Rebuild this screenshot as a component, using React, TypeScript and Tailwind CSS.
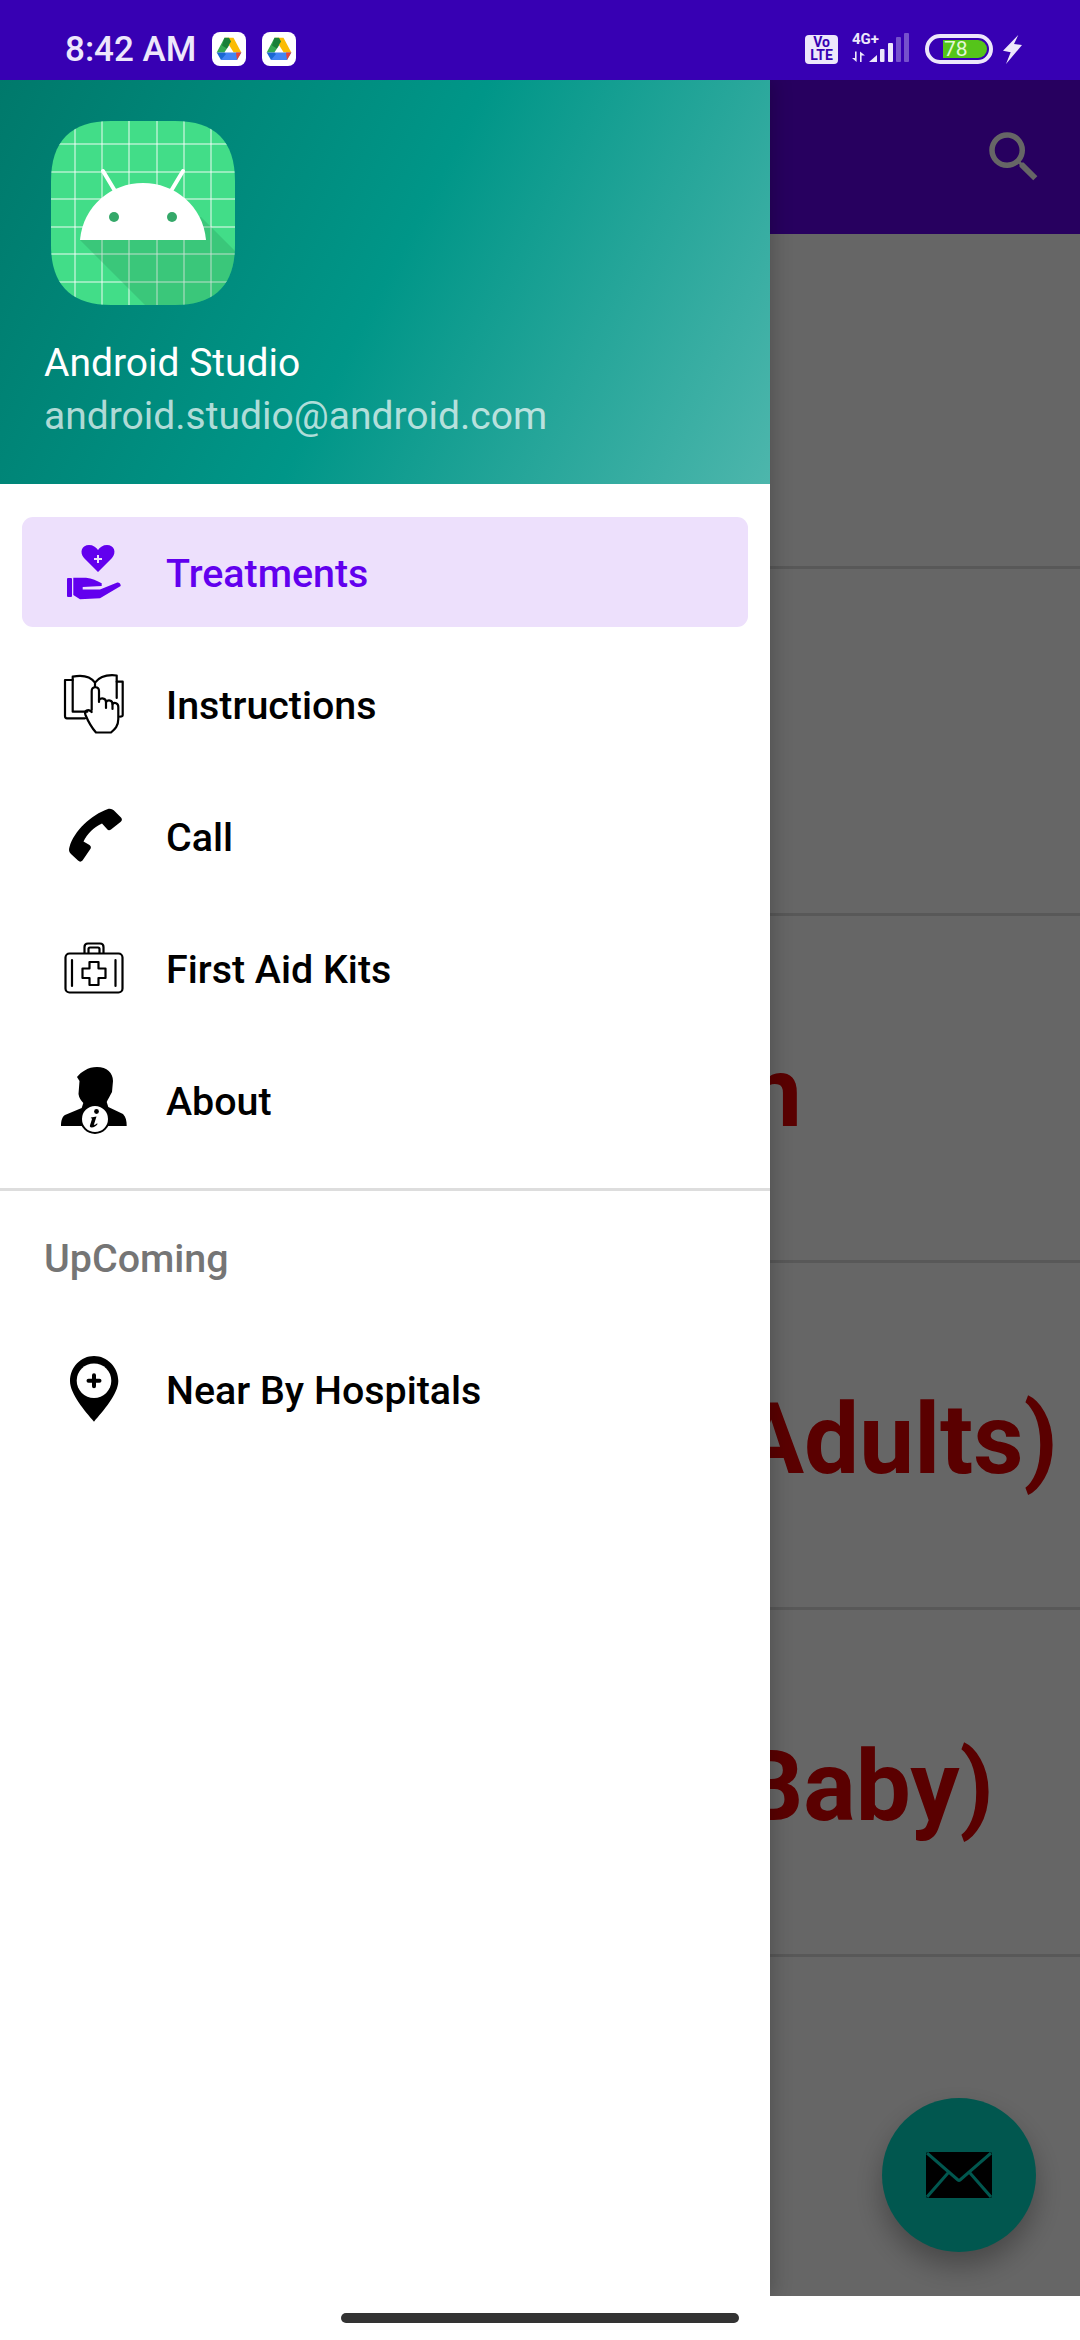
import React from 'react';

const Drive = () => (
  <div className="w-[34px] h-[34px] bg-white rounded-[8px] shrink-0">
    <svg viewBox="0 0 34 34" className="w-full h-full">
      <polygon points="12.5,5.7 21.5,5.7 29.3,20.5 21.7,20.5" fill="#fbbc04" />
      <polygon points="12.5,5.7 17,13.5 12.3,20.5 4.7,20.5" fill="#34a853" />
      <polygon points="12.5,5.7 17,5.7 19,9.5 14.8,16.5 10,13.5" fill="#188038" />
      <polygon points="12.3,20.5 29.3,20.5 25,28 9,28" fill="#4285f4" />
      <polygon points="4.7,20.5 12.3,20.5 14,22 9,28" fill="#1967d2" />
      <polygon points="24,20.5 29.3,20.5 25,28" fill="#ea4335" />
    </svg>
  </div>
);

const StatusBar = () => (
  <div className="h-[80px] shrink-0 bg-[#3700b3] flex items-center justify-between pl-[65px] pr-[58px] pt-[18px] text-[#ede7fb]">
    <div className="flex items-center">
      <span className="text-[35px] font-medium leading-none w-[147px]">8:42 AM</span>
      <div className="flex gap-[16px]">
        <Drive />
        <Drive />
      </div>
    </div>
    <div className="flex items-center">
      <div className="w-[33px] h-[29px] bg-[#ede7fb] rounded-[4px] flex flex-col items-center justify-center text-[#3700b3] text-[14px] font-bold leading-[13px]">
        <span>Vo</span>
        <span>LTE</span>
      </div>
      <div className="w-[58px] h-[32px] ml-[14px] relative">
        <span className="absolute left-0 top-[-2px] text-[15px] font-bold leading-[16px]">4G+</span>
        <svg viewBox="0 0 58 32" className="absolute inset-0 w-full h-full overflow-visible" fill="currentColor">
          <path d="M3 18.5H4.6V29L0 25H3Z M8 18.5V29H9.6V22.5H13L8 18.5Z" />
          <polygon points="17,29 25,29 25,22" />
          <rect x="28" y="16" width="4.5" height="13" rx="1" />
          <rect x="36" y="10" width="5" height="19" rx="1" />
          <rect x="44" y="4" width="5" height="25" rx="1" opacity=".35" />
          <rect x="52" y="0" width="5" height="29" rx="1" opacity=".35" />
        </svg>
      </div>
      <div className="w-[68px] h-[30px] ml-[15px] border-[4px] border-[#ede7fb] rounded-full flex items-center justify-start pl-[14px]">
        <div className="w-[44px] h-[18px] bg-[#55c41a] rounded-r-full text-[21px] leading-[18px] text-[#e4f7d6] pl-[1px]">78</div>
      </div>
      <svg viewBox="0 0 19 29" className="w-[19px] h-[29px] ml-[10px]" fill="currentColor">
        <polygon points="15.3,0 0,15.7 7.7,17.3 3,29 19,10 11,9" />
      </svg>
    </div>
  </div>
);

const rows = [
  { h: 'h-[335px]', text: '', pr: 'pr-0' },
  { h: 'h-[347px]', text: '', pr: 'pr-0' },
  { h: 'h-[347px]', text: 'Burn', pr: 'pr-[278px]' },
  { h: 'h-[347px]', text: '(Adults)', pr: 'pr-[22px]' },
  { h: 'h-[347px]', text: '(Baby)', pr: 'pr-[86px]' },
];

const Content = () => (
  <div className="absolute inset-0 flex flex-col bg-white">
    <div className="h-[154px] shrink-0 bg-[#6200ee] flex items-center justify-end pr-[33px]">
      <svg viewBox="0 0 24 24" className="w-[66px] h-[66px]" fill="#ffffff">
        <path d="M15.5 14h-.79l-.28-.27A6.471 6.471 0 0 0 16 9.5 6.5 6.5 0 1 0 9.5 16c1.61 0 3.09-.59 4.23-1.57l.27.28v.79l5 4.99L20.49 19l-4.99-5zm-6 0C7.01 14 5 11.99 5 9.5S7.01 5 9.5 5 14 7.01 14 9.5 11.99 14 9.5 14z" />
      </svg>
    </div>
    {rows.map((r, i) => (
      <div key={i} className={`${r.h} shrink-0 border-b-[3px] border-[#dddddd] flex items-center justify-end ${r.pr} pt-[9px]`}>
        <span className="text-[98px] font-bold text-[#e00000] leading-none whitespace-nowrap">{r.text}</span>
      </div>
    ))}
  </div>
);

const AppLogo = () => (
  <svg viewBox="0 0 184 184" className="w-[184px] h-[184px] ml-[7px]">
    <defs>
      <clipPath id="squircle">
        <path d="M60 0H124C164 0 184 20 184 60V124C184 164 164 184 124 184H60C20 184 0 164 0 124V60C0 20 20 0 60 0Z" />
      </clipPath>
    </defs>
    <g clipPath="url(#squircle)">
      <rect width="184" height="184" fill="#42dd88" />
      <g stroke="#ffffff" strokeOpacity=".45" strokeWidth="2">
        {[24, 51, 78, 106, 133, 160].map((x) => (
          <line key={x} x1={x} y1="0" x2={x} y2="184" />
        ))}
        {[23, 51, 78, 106, 133, 161].map((y) => (
          <line key={y} x1="0" y1={y} x2="184" y2={y} />
        ))}
      </g>
      <polygon points="29,119 94,184 184,184 184,130 150,96" fill="#1f7a4a" fillOpacity=".22" />
    </g>
    <g stroke="#ffffff" strokeWidth="4" strokeLinecap="round">
      <line x1="64" y1="70" x2="52" y2="50" />
      <line x1="120" y1="70" x2="132" y2="50" />
    </g>
    <path d="M29 119C32 85 60 62 92 62C124 62 152 85 155 119Z" fill="#ffffff" />
    <circle cx="63" cy="96" r="5" fill="#34a869" />
    <circle cx="121" cy="96" r="5" fill="#34a869" />
  </svg>
);

const TreatIcon = () => (
  <svg viewBox="0 0 66 66" className="w-[66px] h-[66px]" fill="#6200ee">
    <path d="M37 33L23 19C18 13 21 6 28 6C32 6 35 8 37 11C39 8 42 6 46 6C53 6 56 13 51 19Z" />
    <rect x="36" y="16" width="2" height="8" fill="#ede0fc" />
    <rect x="33" y="19" width="8" height="2" fill="#ede0fc" />
    <rect x="6" y="39" width="5" height="19" rx="1" />
    <path d="M12.3 38.7L25 38.7C31 39 36 42 40.7 44.3L40.7 47L21.7 48V50.5L39 50.5L55.7 43.7C58 43 60 45 59.7 47L39 59.3L19 60.3L12.3 56Z" />
  </svg>
);

const BookIcon = () => (
  <svg viewBox="0 0 66 66" className="w-[66px] h-[66px]" fill="none" stroke="#000000" strokeWidth="2.2" strokeLinejoin="round" strokeLinecap="round">
    <path d="M11.7 9H4V45C4 46.5 5 47.3 6 47.3H24" />
    <path d="M26.3 40.7H11.7V5.7C20 4 29 5 34 11.7C39 5 47 3.5 55.7 4.5V27" />
    <path d="M34 11.7V15.5" />
    <path d="M55.7 10.7H61.7V44C61.7 45 61 45.7 59 45.7" />
    <path d="M30.7 39V20C30.7 15 38 15 38 20V31" />
    <path d="M38 29C40 26.5 45 27 45 31V37" />
    <path d="M45 31C47 28.5 51.5 29 51.5 33V38" />
    <path d="M51.5 33C53.5 31 57.3 32 57.3 36V48C57.3 55 54 58 50 61.5H35C31 57 27 50 24.5 44C23 40 27 37 30.7 41" fill="none" />
  </svg>
);

const CallIcon = () => (
  <svg viewBox="0 0 66 66" className="w-[66px] h-[66px]" fill="#000000">
    <path d="M47 6C50 5.5 52 6.5 54 8.5L60 14.5C61.5 16 61 18 59.5 19L50 26.5C48.5 27.8 47 27.5 46 26L41 20.5C33 24 26 31 22.5 38.5L28.5 42C30 43 30.5 45 29 46.5L21.5 57.5C20 59 18.5 59 17 57.5L10 51C8 49 7.5 47 8.5 44C13 28 30 12 47 6Z" />
  </svg>
);

const KitIcon = () => (
  <svg viewBox="0 0 66 66" className="w-[66px] h-[66px]" fill="none" stroke="#000000" strokeWidth="2.2" strokeLinejoin="round" strokeLinecap="round">
    <rect x="4.5" y="18.5" width="57" height="39" rx="4" />
    <path d="M23.5 18V12C23.5 9.5 25 8.5 27 8.5H39C41 8.5 42.5 9.5 42.5 12V18" />
    <path d="M27.5 18V14C27.5 13 28 12.5 29 12.5H37C38 12.5 38.5 13 38.5 14V18" />
    <line x1="11" y1="25" x2="11" y2="51" />
    <line x1="54.5" y1="25" x2="54.5" y2="51" />
    <path d="M28.5 27H37.5V33.5H44.5V43H37.5V50H28.5V43H21.5V33.5H28.5Z" />
  </svg>
);

const AboutIcon = () => (
  <svg viewBox="0 0 66 66" className="w-[66px] h-[66px] overflow-visible" fill="#000000">
    <path d="M16 10C20 5 27 0 36 0C46 0 52 6 52 14L51 25C49 29 47 32 45.7 35L47.3 40L62 47C65 50 65.7 54 65.7 59H0C0 54 1 50 4 48L20.7 41L22.3 36C20 33 18 31 17.5 27L18.5 14Z" />
    <circle cx="34" cy="52" r="14" fill="#ffffff" stroke="#000000" strokeWidth="2" />
    <circle cx="35.5" cy="44.5" r="2.4" />
    <path d="M30 50.5L35.5 49.5L32.8 58C34 58 35 57.2 36 56.3L36.6 57C35 59 33 60.5 30.6 60.5C29 60.5 28.6 59.5 29 58.3L31 52C31 51.4 30.5 51.3 29.8 51.3Z" />
  </svg>
);

const PinIcon = () => (
  <svg viewBox="0 0 66 66" className="w-[66px] h-[66px]">
    <path d="M33 0C46 0 57.3 11 57.3 25C57.3 38 42 55 33 65.7C24 55 9 38 9 25C9 11 20 0 33 0Z" fill="#000000" />
    <circle cx="33" cy="24.7" r="17.3" fill="#ffffff" />
    <path d="M27.5 24.7H38.5M33 19.2V30.2" stroke="#000000" strokeWidth="4" strokeLinecap="round" />
  </svg>
);

const NavItem = ({ icon, label, active }: { icon: React.ReactNode; label: string; active?: boolean }) => (
  <div className="h-[132px] px-[22px] py-[11px]">
    <div className={`h-[110px] rounded-[11px] flex items-center pl-[39px] ${active ? 'bg-[#ede0fc] text-[#6200ee]' : 'text-black'}`}>
      <div className="w-[66px] h-[66px] shrink-0">{icon}</div>
      <span className="ml-[39px] pt-[3px] text-[39.4px] font-medium leading-none">{label}</span>
    </div>
  </div>
);

const Drawer = () => (
  <div className="absolute left-0 top-0 bottom-0 w-[770px] bg-white shadow-[4px_0_18px_rgba(0,0,0,0.2)] flex flex-col">
    <div className="h-[404px] shrink-0 bg-[linear-gradient(117.6deg,#00796b,#009688,#4db6ac)] pl-[44px] pt-[41px]">
      <AppLogo />
      <div className="mt-[32px] text-[39px] leading-[53px] text-white">Android Studio</div>
      <div className="text-[39px] leading-[53px] text-white/70">android.studio@android.com</div>
    </div>
    <div className="pt-[22px]">
      <NavItem icon={<TreatIcon />} label="Treatments" active />
      <NavItem icon={<BookIcon />} label="Instructions" />
      <NavItem icon={<CallIcon />} label="Call" />
      <NavItem icon={<KitIcon />} label="First Aid Kits" />
      <NavItem icon={<AboutIcon />} label="About" />
    </div>
    <div className="mt-[22px] h-[3px] bg-[#dddddd]" />
    <div className="h-[132px] pl-[44px] pt-[3px] flex items-center text-[39.4px] font-medium text-[#757575]">UpComing</div>
    <NavItem icon={<PinIcon />} label="Near By Hospitals" />
  </div>
);

const Fab = () => (
  <div className="absolute right-[44px] bottom-[44px] w-[154px] h-[154px] rounded-full bg-[#03dac5] shadow-[0_14px_28px_rgba(0,0,0,0.3)] flex items-center justify-center">
    <svg viewBox="0 0 66 46" className="w-[66px] h-[46px]">
      <rect width="66" height="46" rx="2" fill="#000000" />
      <path d="M1 1L32 28C32.6 28.5 33.4 28.5 34 28L65 1M22 21L1 45M44 21L65 45" fill="none" stroke="#03dac5" strokeWidth="3" />
    </svg>
  </div>
);

export default function App() {
  return (
    <div className="w-[1080px] h-[2340px] flex flex-col overflow-hidden bg-white font-[Roboto,sans-serif]">
      <StatusBar />
      <div className="relative h-[2216px] shrink-0 overflow-hidden">
        <Content />
        <Fab />
        <div className="absolute inset-0 bg-black/60" />
        <Drawer />
      </div>
      <div className="flex-1 flex items-center justify-center bg-white">
        <div className="w-[398px] h-[10px] rounded-full bg-[#333333]" />
      </div>
    </div>
  );
}
